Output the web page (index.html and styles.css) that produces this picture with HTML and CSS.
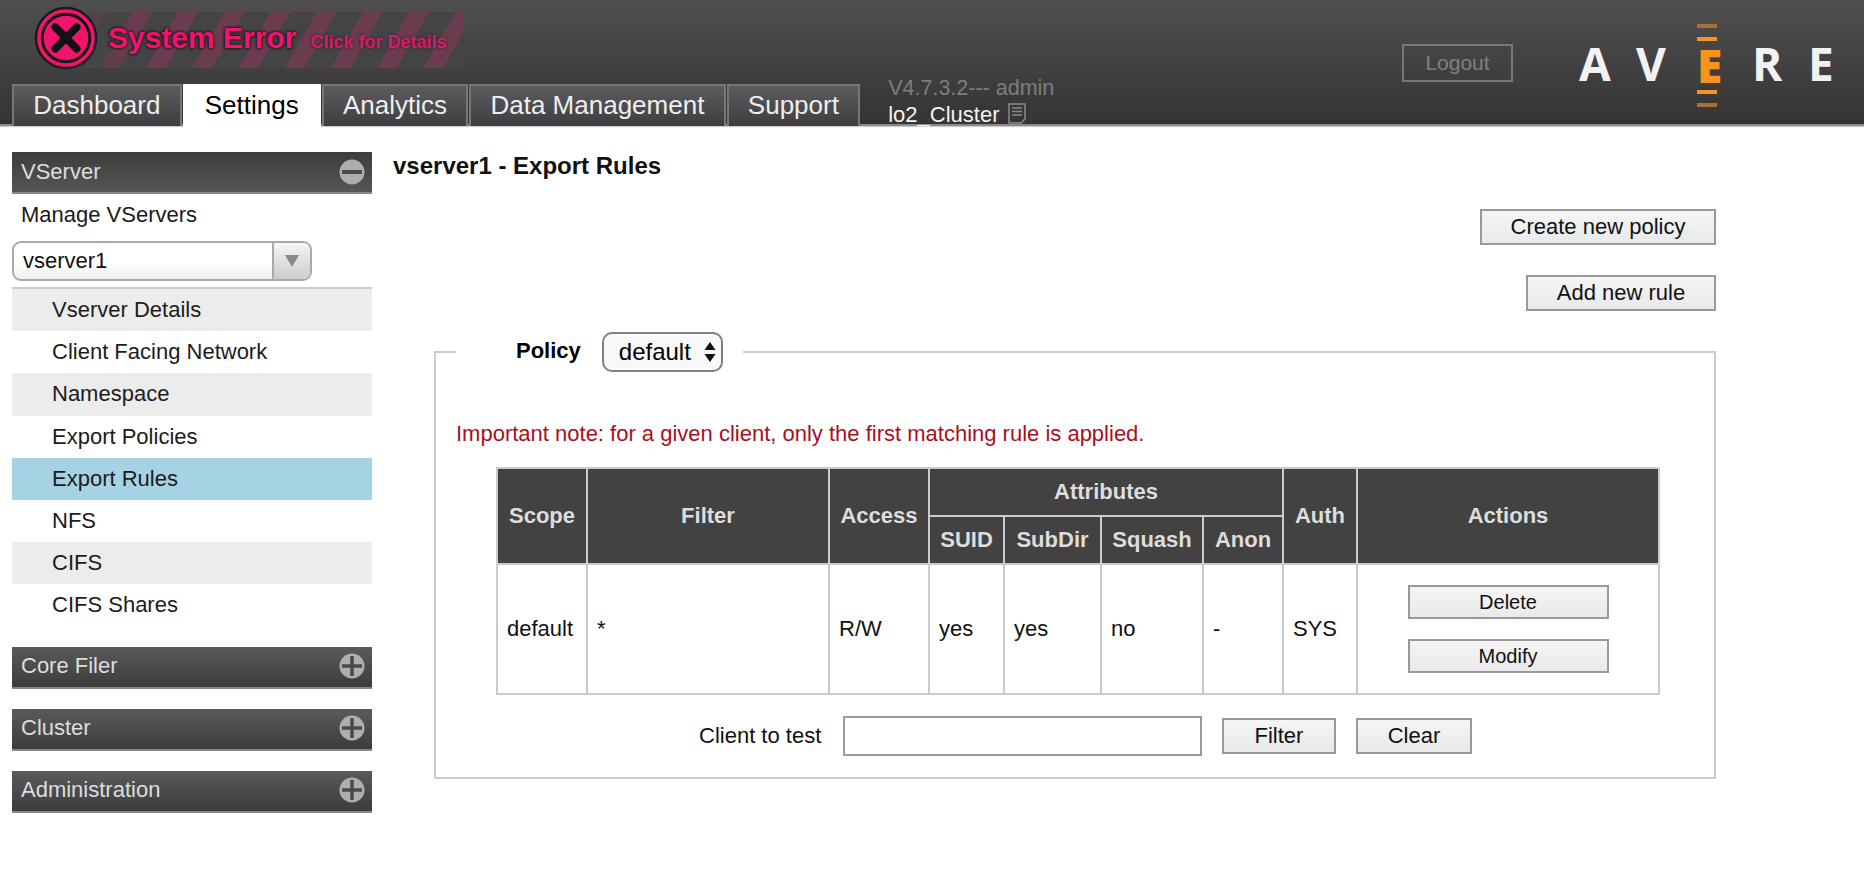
FILE: index.html
```html
<!DOCTYPE html>
<html>
	<head>
		<meta charset="UTF-8">
		<title>Avere Control Panel</title>
		<link rel="stylesheet" href="styles.css">
	</head>
	<body>
		<div class="header">
			<div class="header-left">
				<div class="banner">
					<svg class="banner-icon" width="64" height="64" viewBox="0 0 66 66">
						<circle cx="33" cy="33" r="31" fill="#f0146e" stroke="#1a1a1a" stroke-width="2.5"/>
						<circle cx="33" cy="33" r="24.5" fill="none" stroke="#111" stroke-width="3"/>
						<path d="M22 22L44 44M44 22L22 44" stroke="#111" stroke-width="8" stroke-linecap="round"/>
					</svg>
					<span class="banner-title">System Error</span>
					<span class="banner-link">Click for Details</span>
				</div>
				<div class="tabbar">
					<a class="tab">Dashboard</a>
					<a class="tab now">Settings</a>
					<a class="tab">Analytics</a>
					<a class="tab">Data Management</a>
					<a class="tab">Support</a>
					<div class="version">
						<div class="version-num">V4.7.3.2--- admin</div>
						<div class="cluster">lo2_Cluster
							<svg width="18" height="21" viewBox="0 0 18 21">
								<path d="M1 1H17V16L13 20H1Z" fill="none" stroke="#8a8a8a" stroke-width="1.5"/>
								<path d="M4 5H14M4 8.500H14M4 12H14" stroke="#8a8a8a" stroke-width="1.5"/>
							</svg>
						</div>
					</div>
				</div>
			</div>
			<a class="logout">Logout</a>
			<div class="logo">
				<span class="logo-a">A</span>
				<span class="logo-v">V</span>
				<span class="logo-e">
					<i class="dash dim"></i>
					<i class="dash"></i>
					<b>E</b>
					<i class="dash"></i>
					<i class="dash dim"></i>
				</span>
				<span class="logo-r">R</span>
				<span class="logo-last">E</span>
			</div>
		</div>

		<div class="page">
			<div class="side">
				<div class="side-head open">VServer
					<svg width="26" height="26" viewBox="0 0 26 26"><circle cx="13" cy="13" r="12.500" fill="#aeaeae"/><rect x="3" y="11" width="20" height="4" fill="#4a4a4a"/></svg>
				</div>
				<div class="manage">Manage VServers</div>
				<div class="side-select">
					<span class="side-select-text">vserver1</span>
					<span class="side-select-btn"><svg width="14" height="12" viewBox="0 0 14 12"><path d="M0 0H14L7 12Z" fill="#8a8a8a"/></svg></span>
				</div>
				<ul class="side-list">
					<li class="odd">Vserver Details</li>
					<li>Client Facing Network</li>
					<li class="odd">Namespace</li>
					<li>Export Policies</li>
					<li class="sel">Export Rules</li>
					<li>NFS</li>
					<li class="odd">CIFS</li>
					<li>CIFS Shares</li>
				</ul>
				<div class="side-head">Core Filer
					<svg width="26" height="26" viewBox="0 0 26 26"><circle cx="13" cy="13" r="12.500" fill="#aeaeae"/><path d="M3 13H23M13 3V23" stroke="#4a4a4a" stroke-width="3.500"/></svg>
				</div>
				<div class="side-head">Cluster
					<svg width="26" height="26" viewBox="0 0 26 26"><circle cx="13" cy="13" r="12.500" fill="#aeaeae"/><path d="M3 13H23M13 3V23" stroke="#4a4a4a" stroke-width="3.500"/></svg>
				</div>
				<div class="side-head">Administration
					<svg width="26" height="26" viewBox="0 0 26 26"><circle cx="13" cy="13" r="12.500" fill="#aeaeae"/><path d="M3 13H23M13 3V23" stroke="#4a4a4a" stroke-width="3.500"/></svg>
				</div>
			</div>

			<div class="main">
				<h1 class="title">vserver1 - Export Rules</h1>
				<div class="actions-top">
					<button class="btn btn-policy">Create new policy</button>
					<button class="btn btn-rule">Add new rule</button>
				</div>
				<fieldset class="policy">
					<legend class="policy-legend">
						<span class="policy-label">Policy</span>
						<span class="policy-select">default
							<svg width="12" height="22" viewBox="0 0 12 22"><path d="M6 1L11.500 9H.5ZM6 21L.5 13H11.500Z" fill="#111"/></svg>
						</span>
					</legend>
					<p class="note">Important note: for a given client, only the first matching rule is applied.</p>
					<table class="rules">
						<colgroup>
							<col class="c-scope"><col class="c-filter"><col class="c-access"><col class="c-suid"><col class="c-subdir"><col class="c-squash"><col class="c-anon"><col class="c-auth"><col class="c-actions">
						</colgroup>
						<tr class="row-a">
							<th rowspan="2">Scope</th>
							<th rowspan="2">Filter</th>
							<th rowspan="2">Access</th>
							<th colspan="4">Attributes</th>
							<th rowspan="2">Auth</th>
							<th rowspan="2">Actions</th>
						</tr>
						<tr class="row-b">
							<th>SUID</th>
							<th>SubDir</th>
							<th>Squash</th>
							<th>Anon</th>
						</tr>
						<tr class="row-c">
							<td>default</td>
							<td>*</td>
							<td>R/W</td>
							<td>yes</td>
							<td>yes</td>
							<td>no</td>
							<td>-</td>
							<td>SYS</td>
							<td class="cell-actions">
								<button class="btn btn-small">Delete</button>
								<button class="btn btn-small">Modify</button>
							</td>
						</tr>
					</table>
					<div class="test-row">
						<label class="test-label">Client to test</label>
						<input class="test-input" type="text">
						<button class="btn btn-filter">Filter</button>
						<button class="btn btn-clear">Clear</button>
					</div>
				</fieldset>
			</div>
		</div>
	</body>
</html>
```

FILE: styles.css
```css
*{margin: 0;padding: 0;list-style: none;box-sizing: border-box;}
body{
	font-family: "Liberation Sans", Arial, sans-serif;
	font-size: 22px;
	color: #111;
	background: #fff;
}

/* header */
.header{
	height: 126px;
	display: flex;
	background: linear-gradient(#4f4f4f, #343434);
	border-bottom: 2px solid #8a8a8a;
	box-shadow: 0 1px 1px #ccc;
}
.header-left{
	flex: 1;
	padding: 6px 0 0 12px;
}
.banner{
	width: 430px;
	height: 64px;
	margin-left: 22px;
	display: flex;
	align-items: center;
	background:
		linear-gradient(90deg, rgba(70,70,70,.8), rgba(70,70,70,0) 12%),
		repeating-linear-gradient(120deg, #6b3b50 0, #6b3b50 17px, #444 17px, #444 40px);
	background-size: 378px 56px;
	background-position: 52px 6px;
	background-repeat: no-repeat;
}
.banner-icon{
	flex: none;
}
.banner-title{
	margin-left: 10px;
	font-size: 30px;
	font-weight: bold;
	color: #f0146e;
	text-shadow: 0 0 3px #111, 0 0 3px #111;
	white-space: nowrap;
}
.banner-link{
	margin: 8px 0 0 14px;
	font-size: 18px;
	font-weight: bold;
	color: #d81a68;
	text-shadow: 0 0 3px #222;
	white-space: nowrap;
}
.tabbar{
	display: flex;
	height: 50px;
	margin-top: 6px;
}
.tab{
	height: 42px;
	margin: 8px 1px 0 0;
	padding: 0 19.250px;
	font-size: 26px;
	line-height: 38px;
	color: #eee;
	background: linear-gradient(#5c5c5f, #3e3e40);
	border: solid #777;
	border-width: 2px 2px 0;
}
.tab.now{
	height: 45px;
	padding: 2px 22px 0;
	color: #000;
	background: #fff;
	border: 0;
}
.version{
	margin-left: 27px;
	height: 50px;
}
.version-num{
	font-size: 21.500px;
	color: #7d7d7d;
	line-height: 24px;
}
.cluster{
	margin-top: 2px;
	color: #f2f2f2;
	line-height: 26px;
	display: flex;
	align-items: center;
	gap: 9px;
}
.cluster svg{
	margin-top: -4px;
}
.logout{
	width: 111px;
	height: 38px;
	margin: 44px 66px 0 0;
	border: 2px solid #777;
	color: #808080;
	font-size: 21px;
	line-height: 34px;
	text-align: center;
}
.logo{
	width: 285px;
	display: flex;
	font-family: "Open Sans", sans-serif;
	font-weight: bold;
	font-size: 46px;
	line-height: 40px;
	color: #f2f2f2;
}
.logo span{
	display: block;
	padding-top: 43px;
}
.logo-a{width: 57px;}
.logo-v{width: 61px;}
.logo-r{width: 56px;}
.logo-last{width: 30px;}
.logo .logo-e{
	width: 55px;
	padding-top: 24px;
	color: #f7931e;
}
.logo-e b{
	display: block;
	height: 40px;
	margin-top: -5px;
}
.dash{
	display: block;
	width: 20px;
	height: 4px;
	margin-bottom: 9px;
	background: #f7931e;
}
.logo-e b + .dash{
	margin-top: 5px;
}
.dash.dim{
	background: #a8712f;
}

/* layout */
.page{
	display: flex;
	align-items: flex-start;
}

/* sidebar */
.side{
	width: 360px;
	margin: 26px 0 0 12px;
	flex: none;
}
.side-head{
	height: 42px;
	margin-bottom: 20px;
	padding: 0 7px 1px 9px;
	display: flex;
	align-items: center;
	justify-content: space-between;
	color: #ddd;
	background: linear-gradient(#5a5a5a, #3c3c3c);
	border-bottom: 2px solid #888;
}
.side-head.open{
	margin-bottom: 0;
	padding-bottom: 0;
	background: linear-gradient(#3c3c3c, #565656);
}
.manage{
	height: 43px;
	padding-left: 9px;
	line-height: 41px;
	color: #1a1a1a;
}
.side-select{
	width: 300px;
	height: 40px;
	margin-top: 4px;
	display: flex;
	border: 2px solid #aaa;
	border-radius: 9px;
	background: linear-gradient(#fff 55%, #eee);
	overflow: hidden;
}
.side-select-text{
	flex: 1;
	padding-left: 9px;
	line-height: 35px;
}
.side-select-btn{
	width: 38px;
	display: flex;
	align-items: center;
	justify-content: center;
	border-left: 2px solid #aaa;
	background: linear-gradient(#f6f6f6, #ccc);
}
.side-list{
	margin: 6px 0 20px;
	border-top: 2px solid #ccc;
}
.side-list li{
	height: 42.200px;
	padding-left: 40px;
	line-height: 42px;
	color: #1c1c1c;
}
.side-list .odd{
	background: #ececec;
}
.side-list .sel{
	background: #a5d3e3;
}

/* main */
.main{
	width: 1323px;
	margin-left: 21px;
	padding-top: 27px;
	flex: none;
}
.title{
	font-size: 24px;
	line-height: 26px;
	color: #111;
}
.actions-top{
	display: flex;
	flex-direction: column;
	align-items: flex-end;
	gap: 30px;
	margin-top: 30px;
}
.btn{
	height: 36px;
	font-family: inherit;
	font-size: 22px;
	color: #111;
	background: linear-gradient(#f5f5f5, #e8e9ea);
	border: 2px solid #999;
}
.btn-policy{width: 236px;}
.btn-rule{width: 190px;}
.policy{
	width: 1282px;
	height: 447px;
	margin: 21px 0 0 41px;
	border: 2px solid #ccc;
}
.policy-legend{
	height: 40px;
	margin-left: 20px;
	padding: 0 20px 0 60px;
	display: flex;
	align-items: center;
	gap: 21px;
}
.policy-label{
	font-weight: bold;
	color: #000;
	position: relative;
	top: -1px;
}
.policy-select{
	width: 121px;
	height: 40px;
	padding: 0 5px 0 15px;
	display: flex;
	align-items: center;
	justify-content: space-between;
	font-size: 24px;
	border: 2px solid #808080;
	border-radius: 10px;
	background: #f8f8f8;
	color: #000;
}
.note{
	margin: 49px 0 0 20px;
	line-height: 26px;
	color: #a80f1c;
}

/* rules table */
.rules{
	margin: 20px 0 0 60px;
	width: 1162px;
	table-layout: fixed;
	border-collapse: collapse;
}
.c-scope{width: 90px;}
.c-filter{width: 242px;}
.c-access{width: 100px;}
.c-suid{width: 75px;}
.c-subdir{width: 97px;}
.c-squash{width: 102px;}
.c-anon{width: 80px;}
.c-auth{width: 74px;}
.c-actions{width: 302px;}
.rules th, .rules td{
	border: 2px solid #ccc;
}
.rules th{
	background: #424242;
	color: #ddd;
	font-weight: bold;
}
.row-a{height: 48px;}
.row-b{height: 48px;}
.row-c{height: 130px;}
.rules td{
	padding-left: 9px;
	color: #111;
}
.rules .cell-actions{
	padding: 0;
	text-align: center;
}
.btn-small{
	display: block;
	width: 201px;
	height: 34px;
	margin: 0 auto;
	font-size: 20px;
}
.btn-small + .btn-small{
	margin-top: 20px;
}
.test-row{
	margin: 21px 0 0 263px;
	display: flex;
	align-items: center;
}
.test-label{
	width: 144px;
}
.test-input{
	width: 359px;
	height: 40px;
	border: 2px solid #999;
	background: #fff;
}
.btn-filter{
	width: 114px;
	margin-left: 20px;
}
.btn-clear{
	width: 116px;
	margin-left: 20px;
}
```
